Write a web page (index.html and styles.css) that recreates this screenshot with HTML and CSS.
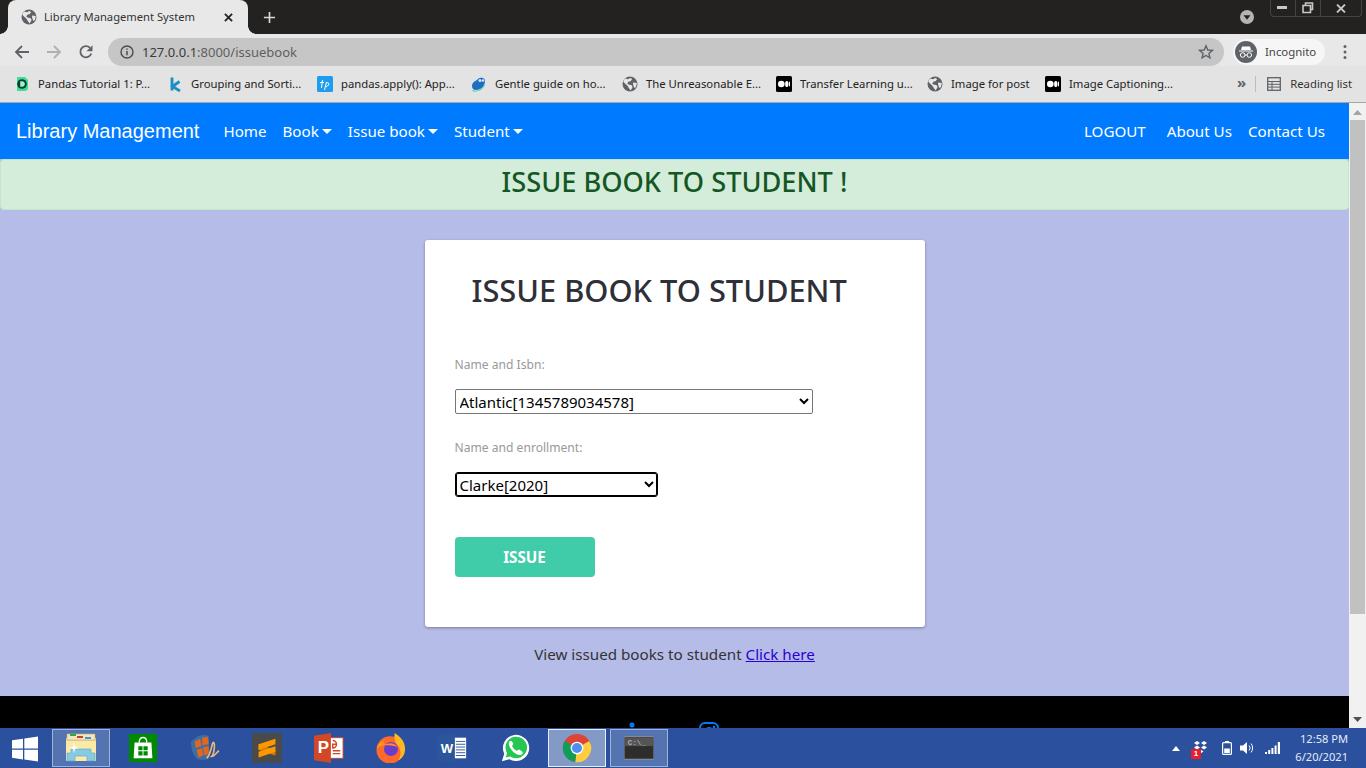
FILE: index.html
```html
<!DOCTYPE html>
<html lang="en">
<head>
<meta charset="utf-8">
<title>Library Management System</title>
<link rel="stylesheet" href="styles.css">
</head>
<body>
<svg class="defs" width="0" height="0" aria-hidden="true">
  <symbol id="globe" viewBox="0 0 16 16">
    <circle cx="8" cy="8" r="7.5" fill="#5f6368"/>
    <path d="M3 2.6 6 3.2 8.2 2l2 1-1.6 2.2-2 .4L5.200 7.400 7 8.800l2.400.3 1.200 2-1.900 3.400L6.800 12 5.500 9.800 2.200 6.800 1.200 5.200Z" fill="#e8e8e8"/>
    <path d="M11 6.500 14.800 7 14 11l-1.600 1-1.200-3Z" fill="#e8e8e8"/>
  </symbol>
  <symbol id="medium" viewBox="0 0 16 16">
    <rect width="16" height="16" rx="1.500" fill="#000"/>
    <circle cx="5.300" cy="8" r="3.300" fill="#fff"/>
    <ellipse cx="10.800" cy="8" rx="1.700" ry="3.100" fill="#fff"/>
    <ellipse cx="13.500" cy="8" rx=".6" ry="2.800" fill="#fff"/>
  </symbol>
</svg>

<div class="chrome">
  <div class="tabstrip">
    <div class="tab">
      <svg class="ico16" viewBox="0 0 16 16"><use href="#globe"/></svg>
      <span class="tab-title">Library Management System</span>
      <svg class="tab-close" viewBox="0 0 10 10"><path d="M1 1 9 9M9 1 1 9" stroke="#222" stroke-width="2"/></svg>
    </div>
    <svg class="newtab" viewBox="0 0 14 14"><path d="M7 1v12M1 7h12" stroke="#d8d8d8" stroke-width="1.800"/></svg>
    <div class="strip-right">
      <svg class="tabsearch" viewBox="0 0 16 16"><circle cx="8" cy="8" r="7" fill="#b4b4b4"/><path d="M4.500 6.200h7L8 10.800Z" fill="#232221"/></svg>
      <div class="winbtns">
        <span class="winbtn"><svg width="12" height="4" viewBox="0 0 12 4"><rect y="0" width="10" height="3" fill="#c8c8c8"/></svg></span>
        <span class="winbtn"><svg width="12" height="12" viewBox="0 0 12 12"><path d="M3.500 3V1h7v6.500H8.500M1 3.500h7.500v7H1Z" fill="none" stroke="#c8c8c8" stroke-width="1.600"/></svg></span>
        <span class="winbtn winbtn-x"><svg width="10" height="9" viewBox="0 0 10 9"><path d="M1 .5 9 8.500M9 .5 1 8.500" stroke="#c8c8c8" stroke-width="1.800"/></svg></span>
      </div>
    </div>
  </div>

  <div class="toolbar">
    <svg class="navicon" viewBox="0 0 16 16"><path d="M15 8H2M8 2 2 8l6 6" fill="none" stroke="#5f6368" stroke-width="1.800"/></svg>
    <svg class="navicon" viewBox="0 0 16 16"><path d="M1 8h13M8 2l6 6-6 6" fill="none" stroke="#b0b0b0" stroke-width="1.800"/></svg>
    <svg class="navicon" viewBox="0 0 16 16"><path d="M13.300 9.500A5.600 5.600 0 1 1 12 3.800" fill="none" stroke="#5f6368" stroke-width="1.800"/><path d="M14.500 1.200v6h-6Z" fill="#5f6368"/></svg>
    <div class="omnibox">
      <svg class="info" viewBox="0 0 14 14"><circle cx="7" cy="7" r="6" fill="none" stroke="#4a4c50" stroke-width="1.400"/><path d="M7 6v4.200M7 3.400v1.400" stroke="#4a4c50" stroke-width="1.500"/></svg>
      <span class="url"><span class="url-host">127.0.0.1</span>:8000/issuebook</span>
      <svg class="star" viewBox="0 0 16 16"><path d="M8 1.800 9.800 6l4.600.4-3.500 3 1 4.500L8 11.500l-3.900 2.400 1-4.500-3.500-3L6.200 6Z" fill="none" stroke="#5f6368" stroke-width="1.400"/></svg>
    </div>
    <div class="incognito">
      <svg class="inc-ico" viewBox="0 0 22 22"><circle cx="11" cy="11" r="11" fill="#5f6368"/><path d="M7 5.500h8l1 3.500H6ZM4 9.500h14v1H4Z" fill="#fff"/><circle cx="7.700" cy="14" r="2.300" fill="none" stroke="#fff"/><circle cx="14.300" cy="14" r="2.300" fill="none" stroke="#fff"/><path d="M10 14h2" stroke="#fff"/></svg>
      <span class="inc-label">Incognito</span>
    </div>
    <svg class="kebab" viewBox="0 0 4 16"><circle cx="2" cy="2.500" r="1.500" fill="#5f6368"/><circle cx="2" cy="8" r="1.500" fill="#5f6368"/><circle cx="2" cy="13.500" r="1.500" fill="#5f6368"/></svg>
  </div>

  <div class="bookmarks">
    <div class="bm-list">
      <span class="bm"><svg class="ico16" viewBox="0 0 16 16"><path d="M3 1h8l3 3v9l-2 2H3Z" fill="#3ddc97"/><circle cx="8" cy="8" r="4.800" fill="#0b3d2e"/><path d="M6.200 5.200h1.800a2.800 2.800 0 0 1 0 5.600H6.200Z" fill="#9ff0cc"/></svg><span class="bm-text">Pandas Tutorial 1: P...</span></span>
      <span class="bm"><svg class="ico16" viewBox="0 0 16 16"><path d="M5 1.500v13M12.500 5.500 5.500 10.500l7.500 4.500" fill="none" stroke="#1a8fc1" stroke-width="2.800"/></svg><span class="bm-text">Grouping and Sorti...</span></span>
      <span class="bm"><svg class="ico16" viewBox="0 0 16 16"><rect width="16" height="16" rx="1.500" fill="#1e9cf0"/><path d="M3 6.500h4M5.500 4 4.500 12M9.500 6l-2 8M9.500 7c3-1.500 3.500 3-.5 3.500" fill="none" stroke="#fff"/></svg><span class="bm-text">pandas.apply(): App...</span></span>
      <span class="bm"><svg class="ico16" viewBox="0 0 16 16"><path d="M1 10C1 6 5 5 7 3c2-2 7-2 7 2 0 5-4 9-9 9-3 0-4-2-4-4Z" fill="#1f6fc0"/><path d="M1 14c5 2 10 0 13-6-1 5-6 8-12 7.500Z" fill="#35cfa0"/><circle cx="9" cy="4.500" r="1.500" fill="#cfe6ff"/><circle cx="12" cy="4.500" r="1.300" fill="#cfe6ff"/></svg><span class="bm-text">Gentle guide on ho...</span></span>
      <span class="bm"><svg class="ico16" viewBox="0 0 16 16"><use href="#globe"/></svg><span class="bm-text">The Unreasonable E...</span></span>
      <span class="bm"><svg class="ico16" viewBox="0 0 16 16"><use href="#medium"/></svg><span class="bm-text">Transfer Learning u...</span></span>
      <span class="bm"><svg class="ico16" viewBox="0 0 16 16"><use href="#globe"/></svg><span class="bm-text">Image for post</span></span>
      <span class="bm"><svg class="ico16" viewBox="0 0 16 16"><use href="#medium"/></svg><span class="bm-text">Image Captioning...</span></span>
    </div>
    <span class="bm-more">»</span>
    <span class="bm-sep"></span>
    <span class="bm bm-reading"><svg class="ico14" viewBox="0 0 14 14"><rect x=".7" y=".7" width="12.600" height="12.600" fill="none" stroke="#5f6368" stroke-width="1.300"/><path d="M1 4.500h12M1 7.300h12M1 10.100h12M5 4.500V13" stroke="#5f6368"/></svg><span class="bm-text">Reading list</span></span>
  </div>
</div>

<div class="viewport">
  <div class="page">
    <nav class="navbar">
      <a class="brand">Library Management</a>
      <a class="nav-link">Home</a>
      <a class="nav-link caret">Book</a>
      <a class="nav-link caret">Issue book</a>
      <a class="nav-link caret">Student</a>
      <span class="nav-spacer"></span>
      <a class="nav-link logout">LOGOUT</a>
      <a class="nav-link">About Us</a>
      <a class="nav-link">Contact Us</a>
    </nav>
    <div class="alert">ISSUE BOOK TO STUDENT !</div>
    <main class="content">
      <form class="card">
        <h1 class="card-title">ISSUE BOOK TO STUDENT</h1>
        <label class="field-label" for="book">Name and Isbn:</label>
        <select class="select select-book" id="book"><option>Atlantic[1345789034578]</option></select>
        <label class="field-label" for="student">Name and enrollment:</label>
        <select class="select select-student" id="student"><option>Clarke[2020]</option></select>
        <button class="issue-btn" type="button">ISSUE</button>
      </form>
      <p class="view-link">View issued books to student <a class="here" href="#">Click here</a></p>
    </main>
    <footer class="footer">
      <svg class="soc soc-in" viewBox="0 0 20 20"><circle cx="3" cy="3" r="2.500" fill="#007bff"/><path d="M1 7h4v13H1ZM8 7h4v2c2-3 8-3 8 3v8h-4v-7c0-3-4-3-4 0v7H8Z" fill="none" stroke="#007bff" stroke-width="1.500"/></svg>
      <svg class="soc soc-ig" viewBox="0 0 20 20"><rect x="1" y="1" width="18" height="18" rx="5" fill="none" stroke="#007bff" stroke-width="2"/><circle cx="10" cy="10" r="4" fill="none" stroke="#007bff" stroke-width="2"/><circle cx="15" cy="5" r="1.200" fill="#007bff"/></svg>
    </footer>
  </div>
  <div class="scrollbar">
    <svg class="sb-arrow" viewBox="0 0 9 5"><path d="M0 5h9L4.500 0Z" fill="#a3a3a3"/></svg>
    <div class="sb-thumb"></div>
    <svg class="sb-arrow" viewBox="0 0 9 5"><path d="M0 0h9L4.500 5Z" fill="#505050"/></svg>
  </div>
</div>

<div class="taskbar">
  <div class="start"><svg width="26" height="26" viewBox="0 0 26 26"><path d="M0 4.200 11 2.700v9.700H0ZM12.300 2.500 26 .5v11.900H12.300ZM0 13.700h11v9.700L0 21.800ZM12.300 13.700H26v11.800l-13.700-2Z" fill="#fff"/></svg></div>
  <div class="task open">
    <svg class="task-ico task-ico-wide" viewBox="0 0 32 30"><path d="M1 5h30v23H1Z" fill="#e6cf8a"/><path d="M2 1h28v6H2Z" fill="#f2e6bf" stroke="#c9b070" stroke-width=".6"/><rect x="5" y="1" width="6" height="2" fill="#2aa84a"/><rect x="12" y="3" width="6" height="2" fill="#c8402a"/><rect x="20" y="4" width="6" height="2" fill="#3a9ad9"/><path d="M1 8h30v20H1Z" fill="#fbe9a8"/><path d="M6 16h20v4h4v8h-8v-5H10v5H2v-8h4Z" fill="#86cbe6" stroke="#5aa6c8" stroke-width=".6"/><path d="M9 9l1 5 4 1-4 1-1 4-1-4-4-1 4-1Z" fill="#fff"/></svg>
  </div>
  <div class="task">
    <svg class="task-ico" viewBox="0 0 32 32"><rect x="1" y="1" width="30" height="30" fill="#008a00"/><path d="M7 10h18l1 17H6Z" fill="#fff"/><path d="M12 10c0-7 8-7 8 0" fill="none" stroke="#fff" stroke-width="1.500"/><path d="M11 14h4.500v4.500H11ZM16.500 14H21v4.500h-4.500ZM11 19.500h4.500V24H11ZM16.500 19.500H21V24h-4.500Z" fill="#008a00"/></svg>
  </div>
  <div class="task">
    <svg class="task-ico" viewBox="0 0 32 32"><path d="M1 9 9 3c4-1 8-1 11 0l1 24c-4 2-9 2-13 1C3 24 1 16 1 9Z" fill="#3c6ea5"/><path d="M5 9l6-3 1 8-6 2ZM13 5l6-1 1 8-7 1ZM7 18l6-2 1 8-5 2ZM14 15l6-1 0 8-5 2Z" fill="#e2661d"/><path d="M18 27c6-8 5-17 7-17 2 0 1 13-2 15 2 1 6-5 8-6" fill="none" stroke="#e9b878" stroke-width="1.800"/></svg>
  </div>
  <div class="task">
    <svg class="task-ico" viewBox="0 0 32 32"><rect width="32" height="32" rx="2" fill="#4a4a4a"/><path d="M7 12 25 18v6L7 18Z" fill="#d87c00"/><path d="M7 12 25 6v6L7 18ZM7 20l18-6v6L7 26Z" fill="#ff9800"/></svg>
  </div>
  <div class="task">
    <svg class="task-ico" viewBox="0 0 32 32"><rect x="14" y="5" width="17" height="22" fill="#fff" stroke="#c8452a"/><path d="M0 3 18 0v32L0 29Z" fill="#d24726"/><path d="M20 8a4 4 0 1 1 0 8v-4h4M20 19h8M20 22h8" fill="none" stroke="#d24726" stroke-width="1.500"/><text class="ppt-letter" x="4" y="21">P</text></svg>
  </div>
  <div class="task">
    <svg class="task-ico" viewBox="0 0 32 32"><circle cx="15" cy="18" r="14.500" fill="#ff6a2b"/><path d="M20 0c6 4 11 9 11 17 0 6-3 10-7 12 3-5 3-12-1-16-3-3-4-8-3-13Z" fill="#ffb824"/><path d="M1 17c1-6 5-8 8-9-2 3 0 4 3 4-4 1-8 1-11 5Z" fill="#ff9a1f"/><circle cx="16" cy="17" r="7.500" fill="#6b3cc9"/><path d="M9 13c4-3 11-3 14 2-4-2-9-2-14-2Z" fill="#ff8c2a"/></svg>
  </div>
  <div class="task">
    <svg class="task-ico" viewBox="0 0 32 32"><path d="M0 3 18 0v32L0 29Z" fill="#2b579a"/><rect x="18" y="5" width="12" height="22" fill="#fff"/><path d="M19 9h10M19 12h10M19 15h10M19 18h10M19 21h10M19 24h10" stroke="#2b579a"/><text class="word-letter" x="3" y="21">W</text></svg>
  </div>
  <div class="task">
    <svg class="task-ico" viewBox="0 0 32 32"><path d="M2 30l2.500-8A14 14 0 1 1 10 28Z" fill="#fff"/><path d="M6 26l1.600-4.500A11.500 11.500 0 1 1 11 25Z" fill="#25c651"/><path d="M10 9c2-2 3 0 4 2 .5 1-1 2-1 3 1 2 3 4 5 5 1 0 2-2 3-1 2 1 4 2 3 4-2 3-7 1-10-2s-6-8-4-11Z" fill="#fff"/></svg>
  </div>
  <div class="task active">
    <svg class="task-ico" viewBox="0 0 32 32"><circle cx="16" cy="16" r="15" fill="#db4437"/><path d="M16 16 29 8.500A15 15 0 0 1 14 31Z" fill="#ffcd40"/><path d="M16 16 14 31A15 15 0 0 1 3 8.500Z" fill="#0f9d58"/><circle cx="16" cy="16" r="6.800" fill="#fff"/><circle cx="16" cy="16" r="5.400" fill="#4e8ff0"/></svg>
  </div>
  <div class="task open">
    <svg class="task-ico" viewBox="0 0 32 24"><rect width="32" height="24" rx="1" fill="#2d2d2d" stroke="#9a9a9a"/><rect x="1" y="1" width="30" height="9" fill="#555"/><text class="cmd-text" x="4" y="9">C:\_</text></svg>
  </div>
  <div class="tray">
    <svg class="tray-up" viewBox="0 0 8 5"><path d="M0 5h8L4 0Z" fill="#fff"/></svg>
    <span class="tray-drop">
      <svg width="17" height="15" viewBox="0 0 17 15"><path d="M5 0l3 2-3 2-3-2ZM12 0l3 2-3 2-3-2ZM5 4.500l3 2-3 2-3-2ZM12 4.500l3 2-3 2-3-2ZM8.500 8.500l3 2-3 2-3-2Z" fill="#fff"/></svg>
      <span class="badge">1</span>
    </span>
    <svg class="tray-bat" viewBox="0 0 10 14"><rect x=".6" y="1.600" width="8.800" height="11.800" rx="1" fill="none" stroke="#fff" stroke-width="1.200"/><rect x="3" y="0" width="4" height="2" fill="#fff"/><rect x="2.200" y="7.500" width="5.600" height="4.500" fill="#fff"/></svg>
    <svg class="tray-vol" viewBox="0 0 15 14"><path d="M0 4.500h3L7 1v12L3 9.500H0Z" fill="#fff"/><path d="M9 4.500a3.500 3.500 0 0 1 0 5M11 2.500a7 7 0 0 1 0 9" fill="none" stroke="#fff"/></svg>
    <svg class="tray-sig" viewBox="0 0 15 12"><path d="M0 10h2v2H0ZM3.200 8h2v4h-2ZM6.400 6h2v6h-2ZM9.600 3.500h2V12h-2ZM12.800 0H15v12h-2.200Z" fill="#fff"/></svg>
    <div class="clock"><span>12:58 PM</span><span>6/20/2021</span></div>
  </div>
</div>
</body>
</html>
```
FILE: styles.css
```css
* { box-sizing: border-box; }
html, body { margin: 0; height: 100%; overflow: hidden; }
body {
  width: 1366px;
  height: 768px;
  display: flex;
  flex-direction: column;
  font-family: "Noto Sans", "Open Sans", sans-serif;
  background: #fff;
}
.defs { position: absolute; }
svg { display: block; flex: none; }
.ico16 { width: 16px; height: 16px; }
.ico14 { width: 14px; height: 14px; }

/* browser chrome */
.chrome { flex: none; height: 103px; display: flex; flex-direction: column; }
.tabstrip { flex: none; height: 34px; background: #232221; display: flex; align-items: flex-end; padding-left: 8px; }
.tab {
  position: relative;
  width: 240px; height: 34px; background: #e8e8e8;
  border-radius: 8px 8px 0 0;
  display: flex; align-items: center; padding: 0 15px 0 13px;
  font-size: 11.200px; color: #333;
}
.tab::before, .tab::after { content: ""; position: absolute; bottom: 0; width: 8px; height: 8px; }
.tab::before { left: -8px; background: radial-gradient(circle at 0 0, #232221 7.500px, #e8e8e8 8px); }
.tab::after { right: -8px; background: radial-gradient(circle at 100% 0, #232221 7.500px, #e8e8e8 8px); }
.tab-title { flex: 1; margin: -2px 0 0 7px; white-space: nowrap; }
.tab-close { width: 9px; height: 9px; }
.newtab { width: 13px; height: 13px; margin: 0 0 10px 15px; }
.strip-right { margin-left: auto; align-self: stretch; display: flex; align-items: flex-start; }
.tabsearch { width: 16px; height: 16px; margin: 9px 15px 0 0; }
.winbtns { display: flex; height: 17px; width: 92px; margin-right: 4px; border: 1px solid #444; border-top: 0; border-radius: 0 0 4px 4px; }
.winbtn { width: 25px; display: flex; align-items: center; justify-content: center; border-right: 1px solid #444; }
.winbtn-x { flex: 1; border-right: 0; }

.toolbar { flex: none; height: 32px; background: #e8e8e8; display: flex; align-items: center; padding: 4px 0 0 14px; }
.navicon { width: 16px; height: 16px; margin-right: 16px; }
.omnibox {
  width: 1116px; height: 28px; margin-left: -2px; border-radius: 14px; background: #c6c6c6;
  display: flex; align-items: center; padding: 0 10px 0 12px;
  font-size: 13px; color: #5f5f5f;
}
.info { width: 14px; height: 14px; margin-right: 8px; }
.url { margin-top: -1px; }
.url-host { color: #3a3a3a; }
.star { width: 16px; height: 16px; margin-left: auto; }
.incognito {
  width: 92px; height: 26px; margin-left: 9px; border-radius: 13px; background: #f6f6f6;
  display: flex; align-items: center; gap: 8px; padding-left: 2px;
  font-size: 11.400px; color: #444;
}
.inc-label { margin-top: -1px; }
.inc-ico { width: 22px; height: 22px; }
.kebab { width: 4px; height: 16px; margin-left: 18px; }

.bookmarks {
  flex: none; height: 37px; background: #e3e3e3; border-bottom: 1px solid #a6a6a6;
  display: flex; align-items: center; padding: 0 14px;
  font-size: 11.300px; color: #222;
}
.bm-list { display: grid; grid-template-columns: 153px 150px 154px 151px 154px 151px 118px auto; }
.bm { display: flex; align-items: center; gap: 8px; white-space: nowrap; }
.bm-text { margin-top: -2px; }
.bm-more { font-size: 15px; font-weight: 700; color: #5f6368; margin: -3px 0 0 auto; line-height: 1; }
.bm-sep { width: 1px; height: 16px; background: #bdbdbd; margin: 0 11px 0 9px; }
.bm-reading { gap: 9px; color: #333; }

/* page */
.viewport { flex: 1; min-height: 0; display: flex; }
.page { flex: 1; min-width: 0; overflow: hidden; background: #b6bce8; display: flex; flex-direction: column; }
.navbar {
  flex: none; height: 56px; background: #007bff; color: #fff;
  display: flex; align-items: center; padding: 0 16px;
}
.brand { font-family: "Liberation Sans", Arial, sans-serif; font-size: 20px; margin-right: 16px; }
.nav-link { padding: 0 8px 1px; font-size: 15.150px; white-space: nowrap; }
.caret::after {
  content: ""; display: inline-block; margin-left: 3px; vertical-align: 3px;
  border-top: 5px solid #fff; border-left: 5px solid transparent; border-right: 5px solid transparent;
}
.nav-spacer { flex: 1; }
.logout { margin-right: 5px; }
.alert {
  flex: none; height: 51px; padding-bottom: 6px; background: #d4edda; border: 1px solid #c3e6cb; border-radius: 4px;
  color: #155724; font-size: 27.200px; font-weight: 500;
  display: flex; align-items: center; justify-content: center;
}
.content { flex: none; height: 486px; padding-top: 30px; display: flex; flex-direction: column; align-items: center; }
.card {
  width: 500px; height: 387px; background: #fff; border-radius: 3px;
  box-shadow: 0 1px 3px rgba(0,0,0,.35);
  padding: 30px; display: flex; flex-direction: column; align-items: flex-start;
}
.card-title { margin: 0 0 46px 17px; font-size: 30.800px; font-weight: 500; color: #2f2f38; line-height: 40px; white-space: nowrap; }
.field-label { font-size: 12.100px; color: #999; line-height: 18px; margin-bottom: 15px; }
.select {
  height: 25px; font-family: inherit; font-size: 15px; color: #000; background: #fff;
  padding: 0; margin-bottom: 25px;
}
.select-book { width: 358px; border: 1px solid #767676; border-radius: 2px; }
.select-student { width: 203px; border: 1px solid #000; border-radius: 3px; box-shadow: inset 0 0 0 1px #000; margin-bottom: 24px; }
.issue-btn {
  width: 140px; height: 40px; margin-top: 16px; border: 0; border-radius: 4px;
  background: #40cca8; color: #fff; font-family: inherit; font-size: 15.200px; font-weight: 700;
}
.view-link { margin: 17px 0 0; font-size: 15.200px; color: #333; line-height: 20px; }
.here { color: #2a00d4; }
.footer { flex: 1; background: #000; display: flex; padding: 26px 0 0 629px; gap: 50px; }
.soc { width: 20px; height: 20px; }

/* scrollbar */
.scrollbar { flex: none; width: 17px; background: #f1f1f1; display: flex; flex-direction: column; align-items: center; padding: 7px 0 6px; }
.sb-arrow { width: 9px; height: 5px; }
.sb-thumb { width: 15px; height: 494px; background: #c1c1c1; margin: 5px 0 auto; }

/* taskbar */
.taskbar { flex: none; height: 40px; background: #2a509e; display: flex; align-items: center; gap: 4px; color: #fff; }
.start { width: 48px; height: 40px; display: flex; align-items: center; justify-content: center; padding: 1px 0 0 2px; }
.task { width: 58px; height: 38px; display: flex; align-items: center; justify-content: center; border: 1px solid transparent; }
.task-ico { width: 30px; height: 30px; }
.task-ico-wide { width: 32px; }
.open { background: rgba(255,255,255,.2); border-color: rgba(255,255,255,.45); }
.active { background: rgba(255,255,255,.42); border: 1px solid #e8eef8; }
.ppt-letter { font: 700 18px "Liberation Sans", sans-serif; fill: #fff; }
.word-letter { font: 700 14px "Liberation Sans", sans-serif; fill: #fff; }
.cmd-text { font: 700 8px "Liberation Mono", monospace; fill: #aaa; }
.tray { margin-left: auto; display: flex; align-items: center; height: 40px; padding-right: 18px; }
.tray-up { width: 8px; height: 5px; }
.tray-drop { position: relative; width: 17px; height: 15px; margin-left: 12px; }
.badge {
  position: absolute; left: -1px; bottom: -3px; width: 10px; height: 10px; background: #e81e2c;
  font: 700 8px/10px "Liberation Sans", sans-serif; text-align: center; color: #fff;
}
.tray-bat { width: 10px; height: 14px; margin-left: 13px; }
.tray-vol { width: 15px; height: 14px; margin-left: 8px; }
.tray-sig { width: 15px; height: 12px; margin-left: 10px; }
.clock {
  width: 68px; display: flex; flex-direction: column; align-items: flex-end;
  font-size: 11.100px; line-height: 18px; color: #e6ecf6;
}
```
